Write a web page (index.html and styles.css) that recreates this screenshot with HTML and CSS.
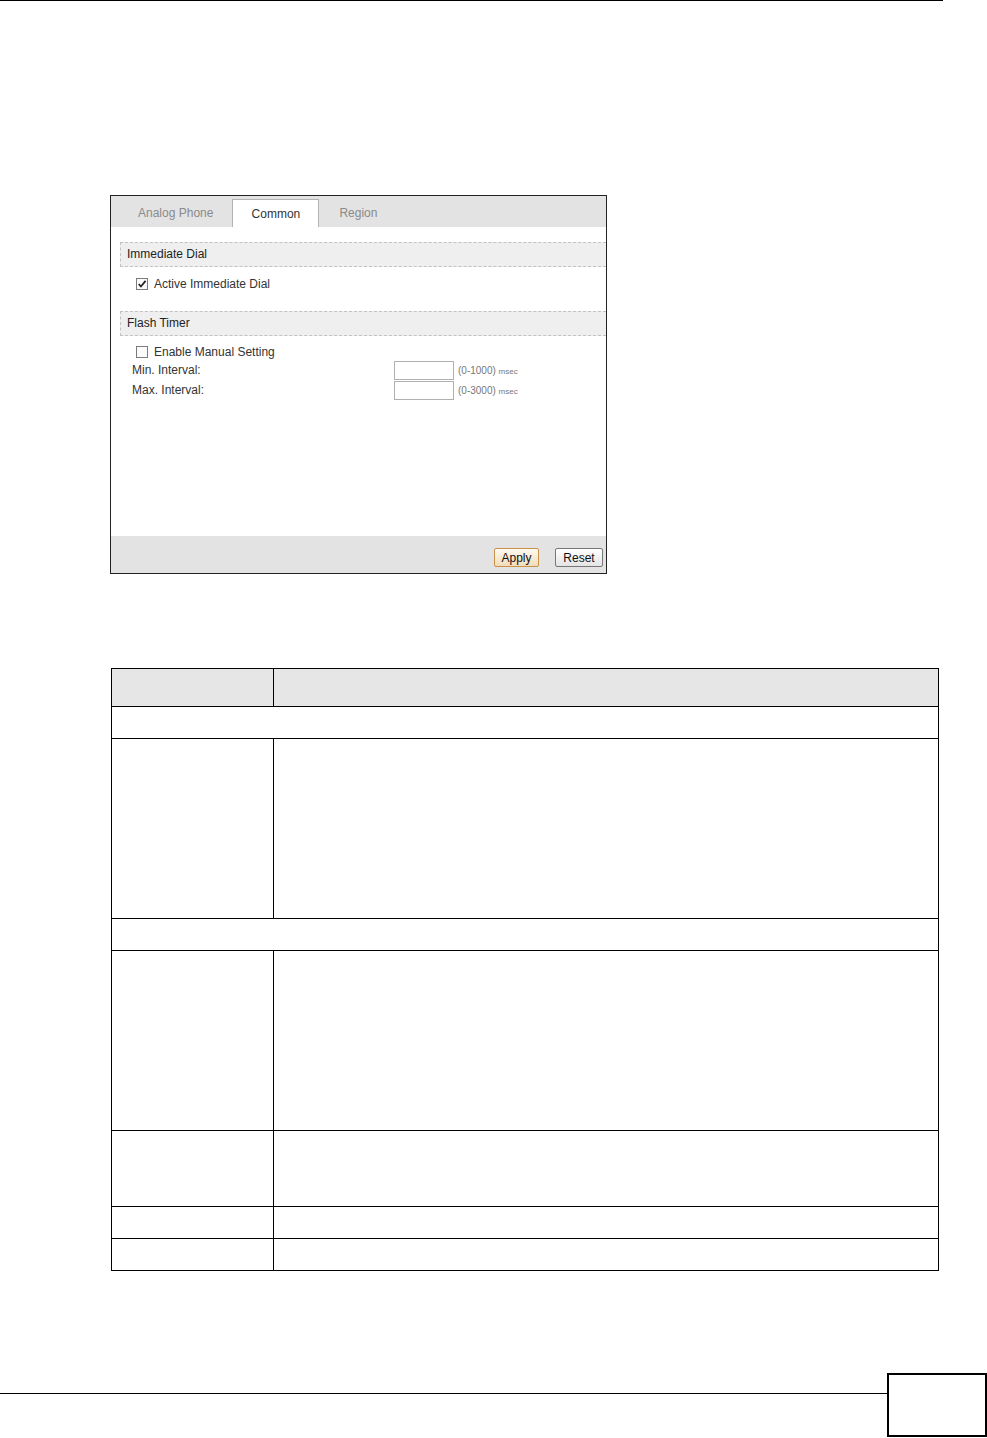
FILE: index.html
```html
<!DOCTYPE html>
<html lang="en">
<head>
  <meta charset="UTF-8">
  <title>Common</title>
  <link rel="stylesheet" href="styles.css">
</head>
<body>
  <div class="page">
    <div class="top-rule"></div>

    <div class="shot">
      <div class="tabs">
        <div class="tab">Analog Phone</div>
        <div class="tab active">Common</div>
        <div class="tab">Region</div>
      </div>

      <div class="shot-body">
        <div class="section-head">Immediate Dial</div>
        <label class="check-row">
          <span class="box checked">
            <svg viewBox="0 0 11 11" width="11" height="11"><path d="M2.5 5.5 L4.5 7.8 L8.8 2.6" fill="none" stroke="#222" stroke-width="1.6"/></svg>
          </span>
          Active Immediate Dial
        </label>

        <div class="section-head second">Flash Timer</div>
        <label class="check-row manual">
          <span class="box"></span>
          Enable Manual Setting
        </label>
        <div class="field-row">
          <span class="field-label">Min. Interval:</span>
          <span class="input"></span>
          <span class="hint">(0-1000) <small>msec</small></span>
        </div>
        <div class="field-row">
          <span class="field-label">Max. Interval:</span>
          <span class="input"></span>
          <span class="hint">(0-3000) <small>msec</small></span>
        </div>
      </div>

      <div class="shot-foot">
        <button class="btn apply">Apply</button>
        <button class="btn reset">Reset</button>
      </div>
    </div>

    <table class="desc">
      <tr class="head"><th class="col-label"></th><th></th></tr>
      <tr class="row-s"><td colspan="2"></td></tr>
      <tr class="row-l"><td></td><td></td></tr>
      <tr class="row-s"><td colspan="2"></td></tr>
      <tr class="row-l"><td></td><td></td></tr>
      <tr class="row-m"><td></td><td></td></tr>
      <tr class="row-s"><td></td><td></td></tr>
      <tr class="row-s"><td></td><td></td></tr>
    </table>

    <div class="page-foot">
      <div class="foot-rule"></div>
      <div class="page-num"></div>
    </div>
  </div>
</body>
</html>
```

FILE: styles.css
```css
body {
  margin: 0;
  padding: 0;
  background: #fff;
  color: #222;
  font-family: "Liberation Sans", Arial, sans-serif;
}

.page {
  width: 987px;
  height: 1438px;
  position: relative;
  overflow: hidden;
}

.top-rule {
  width: 943px;
  height: 1px;
  border-top: 1px solid #000;
}

/* screenshot of the web configurator */
.shot {
  margin: 193px 0 0 110px;
  width: 495px;
  height: 377px;
  border: 1px solid #222;
  display: flex;
  flex-direction: column;
  font-size: 12px;
}

.tabs {
  height: 31px;
  background: #e3e3e3;
  display: flex;
  align-items: flex-end;
  padding-left: 11px;
}

.tab {
  height: 28px;
  line-height: 28px;
  padding: 0 16px;
  color: #8a8a8a;
  box-sizing: border-box;
}

.tab:first-child {
  padding-right: 15px;
}

.tab.active {
  width: 87px;
  padding: 0;
  text-align: center;
  background: #fff;
  color: #333;
  border: 1px solid #b4b4b4;
  border-bottom: none;
  margin: 0 4px;
}

.shot-body {
  flex: 1;
  background: #fff;
  padding: 15px 0 0 9px;
}

.section-head {
  height: 23px;
  line-height: 23px;
  background: #efefef;
  border: 1px dashed #c2c2c2;
  border-right: none;
  padding-left: 6px;
  color: #222;
}

.section-head.second {
  margin-top: 21px;
}

.check-row {
  display: flex;
  align-items: center;
  gap: 6px;
  padding-left: 16px;
  margin-top: 11px;
  height: 12px;
  color: #333;
}

.check-row.manual {
  margin-top: 10px;
}

.box {
  width: 12px;
  height: 12px;
  border: 1px solid #7c7c7c;
  box-sizing: border-box;
  background: #fbfbfb;
  position: relative;
}

.box svg {
  position: absolute;
  left: -1px;
  top: -1px;
  width: 12px;
  height: 12px;
}

.field-row {
  display: flex;
  align-items: center;
  height: 20px;
  padding-left: 12px;
  color: #333;
}

.check-row + .field-row {
  margin-top: 2px;
}

.field-label {
  width: 262px;
}

.input {
  width: 60px;
  height: 19px;
  border: 1px solid #b0b0b0;
  box-sizing: border-box;
  background: #fff;
}

.hint {
  margin-left: 4px;
  font-size: 10px;
  color: #777;
}

.hint small {
  font-size: 8px;
}

.shot-foot {
  height: 37px;
  background: #e3e3e3;
  display: flex;
  justify-content: flex-end;
  align-items: flex-start;
  gap: 16px;
  padding: 12px 3px 0 0;
  box-sizing: border-box;
}

.btn {
  height: 19px;
  font-family: "Liberation Sans", Arial, sans-serif;
  font-size: 12px;
  color: #111;
  border: 1px solid #777;
  border-radius: 2px;
  background: linear-gradient(#ffffff, #e4e4e4);
  padding: 0;
}

.btn.apply {
  width: 45px;
  border-color: #c9924a;
  background: linear-gradient(#fffaf0, #f1dcb8);
}

.btn.reset {
  width: 48px;
}

/* description table */
.desc {
  margin: 94px 0 0 111px;
  width: 828px;
  border-collapse: collapse;
}

.desc th,
.desc td {
  border: 1px solid #000;
  padding: 0;
}

.desc .head {
  height: 38px;
  background: #e6e6e6;
}

.desc .col-label {
  width: 161px;
}

.desc .row-s { height: 32px; }
.desc .row-m { height: 76px; }
.desc .row-l { height: 180px; }

/* page footer */
.page-foot {
  position: absolute;
  left: 0;
  top: 1373px;
  width: 987px;
  display: flex;
  align-items: flex-start;
}

.foot-rule {
  width: 887px;
  margin-top: 20px;
  border-top: 1px solid #000;
}

.page-num {
  width: 96px;
  height: 60px;
  border: 2px solid #000;
}
```
